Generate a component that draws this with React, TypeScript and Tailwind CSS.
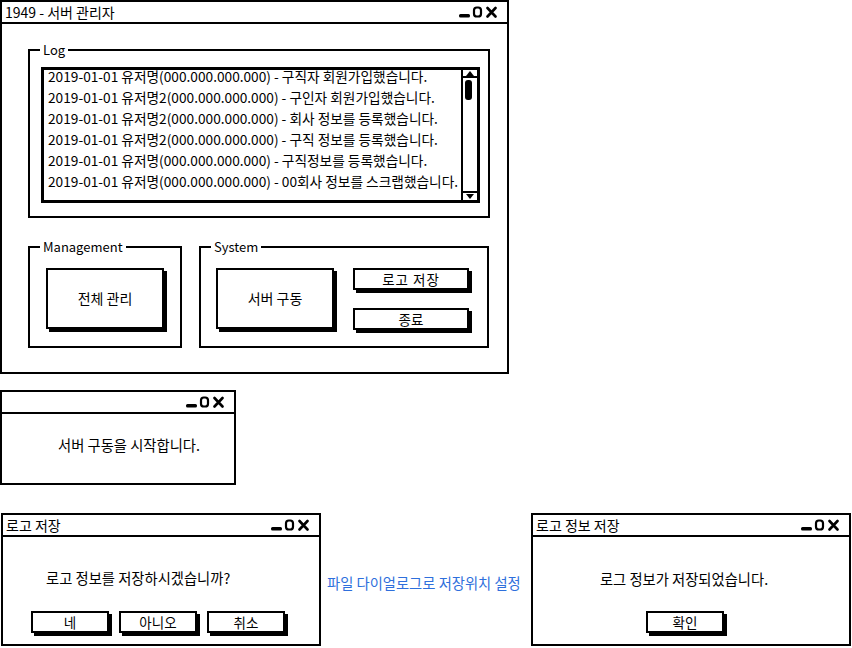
import React from 'react';

const logs = [
  '2019-01-01 유저명(000.000.000.000) - 구직자 회원가입했습니다.',
  '2019-01-01 유저명2(000.000.000.000) - 구인자 회원가입했습니다.',
  '2019-01-01 유저명2(000.000.000.000) - 회사 정보를 등록했습니다.',
  '2019-01-01 유저명2(000.000.000.000) - 구직 정보를 등록했습니다.',
  '2019-01-01 유저명(000.000.000.000) - 구직정보를 등록했습니다.',
  '2019-01-01 유저명(000.000.000.000) - 00회사 정보를 스크랩했습니다.',
];

function Controls() {
  return (
    <svg width="44" height="12" viewBox="0 0 44 12">
      <rect x="0" y="8" width="11" height="3.5" rx="1.5" fill="#000" />
      <rect x="15" y="1.5" width="7" height="9" rx="2.8" fill="none" stroke="#000" strokeWidth="2.2" />
      <path d="M28.5 2 L36.5 10.5 M36.5 2 L28.5 10.5" stroke="#000" strokeWidth="2.6" strokeLinecap="round" />
    </svg>
  );
}

function Win({ title, className, children }: { title?: string; className: string; children: React.ReactNode }) {
  return (
    <div className={`border-2 border-black bg-white flex flex-col ${className}`}>
      <div className="h-[22px] shrink-0 border-b-2 border-black flex items-center justify-between pl-[3px] pr-[4px]">
        <span className="text-[14px] leading-none">{title}</span>
        <Controls />
      </div>
      <div className="flex-1">{children}</div>
    </div>
  );
}

function Btn({ label, className }: { label: string; className: string }) {
  return (
    <div className={`border-2 border-black bg-white shadow-[3px_3px_0_0_#000] flex items-center justify-center ${className}`}>
      {label}
    </div>
  );
}

function Group({ label, className, children }: { label: string; className: string; children: React.ReactNode }) {
  return (
    <fieldset className={`border-2 border-black ${className}`}>
      <legend className="ml-[10px] px-[3px] text-[13px] leading-[14px]">{label}</legend>
      {children}
    </fieldset>
  );
}

function Scrollbar() {
  return (
    <div className="w-[16px] border-l-2 border-black flex flex-col">
      <div className="h-[8px] border-b-2 border-black flex items-center justify-center">
        <svg width="8" height="5" viewBox="0 0 8 5"><path d="M0 5 L4 0 L8 5 Z" fill="#000" /></svg>
      </div>
      <div className="flex-1 pt-[2px] pl-[2px]">
        <div className="w-[7px] h-[20px] rounded-[3px] bg-black" />
      </div>
      <div className="h-[9px] border-t-2 border-black flex items-center justify-center">
        <svg width="8" height="5" viewBox="0 0 8 5"><path d="M0 0 L8 0 L4 5 Z" fill="#000" /></svg>
      </div>
    </div>
  );
}

export default function App() {
  return (
    <div className="w-[852px] h-[648px] bg-white text-black font-['Noto_Sans_CJK_KR','Noto_Sans',sans-serif] flex flex-col overflow-hidden">
      <Win title="1949 - 서버 관리자" className="w-[509px] h-[374px]">
        <div className="pl-[26px]">
          <Group label="Log" className="mt-[19px] w-[462px] h-[175px]">
            <div className="mt-[10px] ml-[11px] w-[439px] h-[136px] border-[3px] border-black flex">
              <div className="flex-1 pl-[4px] mt-[-4px] text-[13.7px] leading-[21px] whitespace-nowrap overflow-hidden">
                {logs.map((l, i) => (
                  <div key={i}>{l}</div>
                ))}
              </div>
              <Scrollbar />
            </div>
          </Group>
          <div className="flex gap-[17px] mt-[22px]">
            <Group label="Management" className="w-[154px] h-[108px]">
              <div className="pt-[14px] pl-[16px]">
                <Btn label="전체 관리" className="w-[118px] h-[61px] text-[14px]" />
              </div>
            </Group>
            <Group label="System" className="w-[290px] h-[108px]">
              <div className="pt-[14px] pl-[15px] flex gap-[19px]">
                <Btn label="서버 구동" className="w-[118px] h-[61px] text-[14px]" />
                <div className="flex flex-col gap-[18px]">
                  <Btn label="로고 저장" className="w-[116px] h-[22px] text-[13.5px] tracking-[1px]" />
                  <Btn label="종료" className="w-[116px] h-[22px] text-[13.5px]" />
                </div>
              </div>
            </Group>
          </div>
        </div>
      </Win>

      <Win className="w-[236px] h-[95px] mt-[16px]">
        <div className="pt-[22px] pl-[56px] text-[14.3px] leading-[18px]">서버 구동을 시작합니다.</div>
      </Win>

      <div className="flex items-center mt-[28px]">
        <Win title="로고 저장" className="ml-[1px] w-[320px] h-[133px]">
          <div className="pt-[32px] pl-[43px] text-[14.3px] leading-[18px]">로고 정보를 저장하시겠습니까?</div>
          <div className="flex gap-[10px] pl-[28px] mt-[24px]">
            <Btn label="네" className="w-[78px] h-[22px] text-[13.5px]" />
            <Btn label="아니오" className="w-[78px] h-[22px] text-[13.5px]" />
            <Btn label="취소" className="w-[78px] h-[22px] text-[13.5px]" />
          </div>
        </Win>
        <div className="ml-[6px] mt-[7px] w-[204px] text-[14.3px] whitespace-nowrap text-[#2e6fdc]">파일 다이얼로그로 저장위치 설정</div>
        <Win title="로고 정보 저장" className="w-[320px] h-[133px]">
          <div className="pt-[33px] text-center text-[14.3px] leading-[18px] pr-[14px]">로그 정보가 저장되었습니다.</div>
          <div className="flex justify-center mt-[23px] pr-[12px]">
            <Btn label="확인" className="w-[78px] h-[22px] text-[13.5px]" />
          </div>
        </Win>
      </div>
    </div>
  );
}
